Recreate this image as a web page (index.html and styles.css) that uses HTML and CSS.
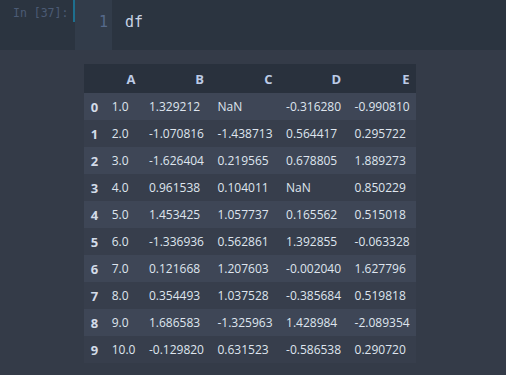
FILE: index.html
```html
<!DOCTYPE html>
<html>
<head>
<meta charset="utf-8">
<link rel="stylesheet" href="styles.css">
</head>
<body>
<div class="cell">
  <div class="input">
    <div class="prompt">In [37]:</div>
    <div class="marker"></div>
    <div class="gutter">1</div>
    <div class="code">df</div>
  </div>
  <div class="output">
    <table class="dataframe">
      <thead>
        <tr><th></th><th>A</th><th>B</th><th>C</th><th>D</th><th>E</th></tr>
      </thead>
      <tbody>
        <tr><th>0</th><td>1.0</td><td>1.329212</td><td>NaN</td><td>-0.316280</td><td>-0.990810</td></tr>
        <tr><th>1</th><td>2.0</td><td>-1.070816</td><td>-1.438713</td><td>0.564417</td><td>0.295722</td></tr>
        <tr><th>2</th><td>3.0</td><td>-1.626404</td><td>0.219565</td><td>0.678805</td><td>1.889273</td></tr>
        <tr><th>3</th><td>4.0</td><td>0.961538</td><td>0.104011</td><td>NaN</td><td>0.850229</td></tr>
        <tr><th>4</th><td>5.0</td><td>1.453425</td><td>1.057737</td><td>0.165562</td><td>0.515018</td></tr>
        <tr><th>5</th><td>6.0</td><td>-1.336936</td><td>0.562861</td><td>1.392855</td><td>-0.063328</td></tr>
        <tr><th>6</th><td>7.0</td><td>0.121668</td><td>1.207603</td><td>-0.002040</td><td>1.627796</td></tr>
        <tr><th>7</th><td>8.0</td><td>0.354493</td><td>1.037528</td><td>-0.385684</td><td>0.519818</td></tr>
        <tr><th>8</th><td>9.0</td><td>1.686583</td><td>-1.325963</td><td>1.428984</td><td>-2.089354</td></tr>
        <tr><th>9</th><td>10.0</td><td>-0.129820</td><td>0.631523</td><td>-0.586538</td><td>0.290720</td></tr>
      </tbody>
    </table>
  </div>
</div>
</body>
</html>
```
FILE: styles.css
```css
html, body {
  margin: 0;
  padding: 0;
  background: #343b48;
  height: 100%;
}
.cell {
  display: flex;
  flex-direction: column;
}
.input {
  display: flex;
  height: 50px;
  background: #2b3440;
}
.prompt {
  width: 60px;
  padding: 6px 0 0 13px;
  font-family: "DejaVu Sans Mono", monospace;
  font-size: 11.5px;
  color: #4b5b75;
  white-space: nowrap;
}
.marker {
  width: 2px;
  height: 22px;
  background: #1e6f8e;
}
.gutter {
  width: 33px;
  padding: 13px 4px 0 0;
  background: #323c4a;
  text-align: right;
  font-family: "DejaVu Sans Mono", monospace;
  font-size: 15px;
  color: #566a8b;
}
.code {
  padding: 13px 0 0 13px;
  font-family: "DejaVu Sans Mono", monospace;
  font-size: 15px;
  color: #c9d4e6;
}
.output {
  padding: 14px 0 0 84px;
}
.dataframe {
  border-collapse: collapse;
  font-family: "Open Sans", sans-serif;
  font-size: 12px;
  color: #dfe5ee;
}
.dataframe th, .dataframe td {
  padding: 0 6.75px;
  white-space: nowrap;
}
.dataframe thead tr {
  height: 29px;
  background: #29313d;
}
.dataframe thead th {
  text-align: right;
  font-weight: bold;
  font-size: 13px;
  color: #bccbe6;
}
.dataframe tbody tr {
  height: 27px;
}
.dataframe tbody tr:nth-child(odd) {
  background: #3e4656;
}
.dataframe tbody tr:nth-child(even) {
  background: #373e4c;
}
.dataframe tbody th {
  text-align: left;
  font-weight: bold;
  font-size: 13px;
  color: #d3dbe8;
}
.dataframe td {
  text-align: left;
}
```
